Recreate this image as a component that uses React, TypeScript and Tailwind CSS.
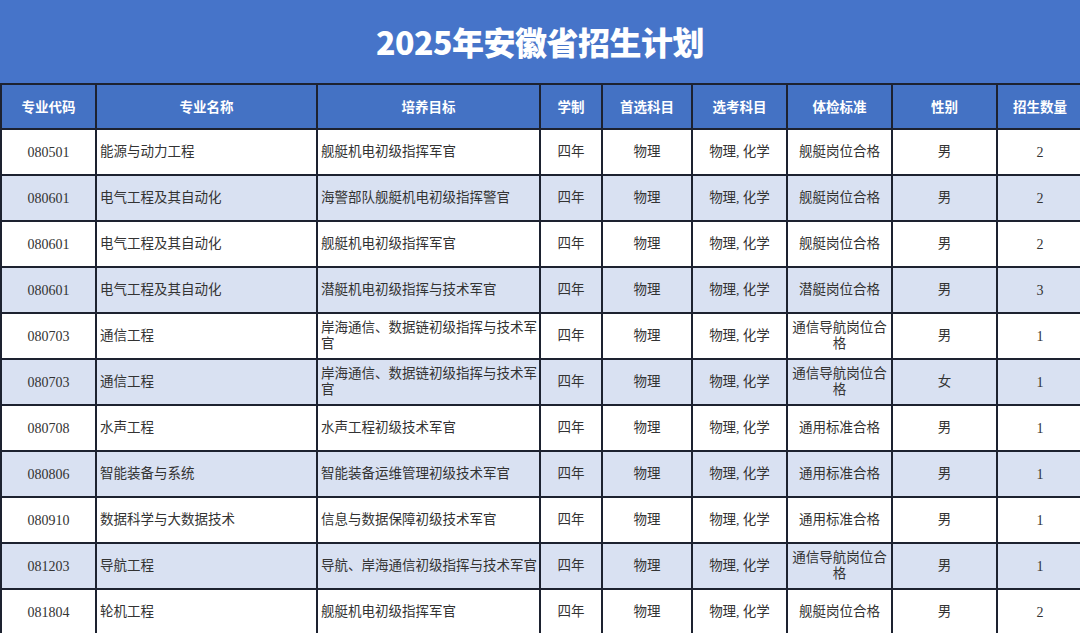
const headers = ["专业代码", "专业名称", "培养目标", "学制", "首选科目", "选考科目", "体检标准", "性别", "招生数量"];

// [代码, 名称, 目标, 体检, 性别, 数量]
const rows: [string, string, string, string, string, string][] = [
  ["080501", "能源与动力工程", "舰艇机电初级指挥军官", "舰艇岗位合格", "男", "2"],
  ["080601", "电气工程及其自动化", "海警部队舰艇机电初级指挥警官", "舰艇岗位合格", "男", "2"],
  ["080601", "电气工程及其自动化", "舰艇机电初级指挥军官", "舰艇岗位合格", "男", "2"],
  ["080601", "电气工程及其自动化", "潜艇机电初级指挥与技术军官", "潜艇岗位合格", "男", "3"],
  ["080703", "通信工程", "岸海通信、数据链初级指挥与技术军官", "通信导航岗位合格", "男", "1"],
  ["080703", "通信工程", "岸海通信、数据链初级指挥与技术军官", "通信导航岗位合格", "女", "1"],
  ["080708", "水声工程", "水声工程初级技术军官", "通用标准合格", "男", "1"],
  ["080806", "智能装备与系统", "智能装备运维管理初级技术军官", "通用标准合格", "男", "1"],
  ["080910", "数据科学与大数据技术", "信息与数据保障初级技术军官", "通用标准合格", "男", "1"],
  ["081203", "导航工程", "导航、岸海通信初级指挥与技术军官", "通信导航岗位合格", "男", "1"],
  ["081804", "轮机工程", "舰艇机电初级指挥军官", "舰艇岗位合格", "男", "2"],
];

const widths = [95, 221, 223, 62, 90, 95, 105, 105, 86];

const App = () => {
  return (
    <div className="w-[1080px] h-[633px] overflow-hidden bg-white">
      {/* Title band */}
      <div className="h-[83px] bg-[#4674c9] flex items-center justify-center">
        <h1
          className="text-white text-[32px] font-black tracking-[-0.5px] -mt-[2px]"
          style={{ fontFamily: '"Noto Sans CJK SC", sans-serif' }}
        >
          2025年安徽省招生计划
        </h1>
      </div>

      <table
        className="table-fixed border-collapse w-[1082px] text-[13.5px] text-[#333]"
        style={{ fontFamily: '"Liberation Serif", "Noto Sans CJK SC", serif' }}
      >
        <colgroup>
          {widths.map((w, i) => (
            <col key={i} style={{ width: w }} />
          ))}
        </colgroup>
        <thead>
          <tr className="h-[45px] bg-[#4472c4]">
            {headers.map((h) => (
              <th
                key={h}
                className="border-2 border-[#1d2230] text-white font-bold text-[13.5px] text-center p-0"
                style={{ fontFamily: '"Noto Sans CJK SC", sans-serif' }}
              >
                {h}
              </th>
            ))}
          </tr>
        </thead>
        <tbody>
          {rows.map((r, i) => (
            <tr key={i} className={`h-[46px] ${i % 2 === 1 ? "bg-[#d9e1f2]" : "bg-white"}`}>
              <td className="border-2 border-[#1d2230] text-center p-0 text-[14px]">{r[0]}</td>
              <td className="border-2 border-[#1d2230] text-left pl-[3px] pr-0 py-0">{r[1]}</td>
              <td className="border-2 border-[#1d2230] text-left pl-[3px] pr-0 py-0 leading-[16px]">{r[2]}</td>
              <td className="border-2 border-[#1d2230] text-center p-0">四年</td>
              <td className="border-2 border-[#1d2230] text-center p-0">物理</td>
              <td className="border-2 border-[#1d2230] text-center p-0">物理, 化学</td>
              <td className="border-2 border-[#1d2230] text-center px-[2px] py-0 leading-[16px]">{r[3]}</td>
              <td className="border-2 border-[#1d2230] text-center p-0">{r[4]}</td>
              <td className="border-2 border-[#1d2230] text-center p-0 text-[14px]">{r[5]}</td>
            </tr>
          ))}
        </tbody>
      </table>
    </div>
  );
};

export default App;
